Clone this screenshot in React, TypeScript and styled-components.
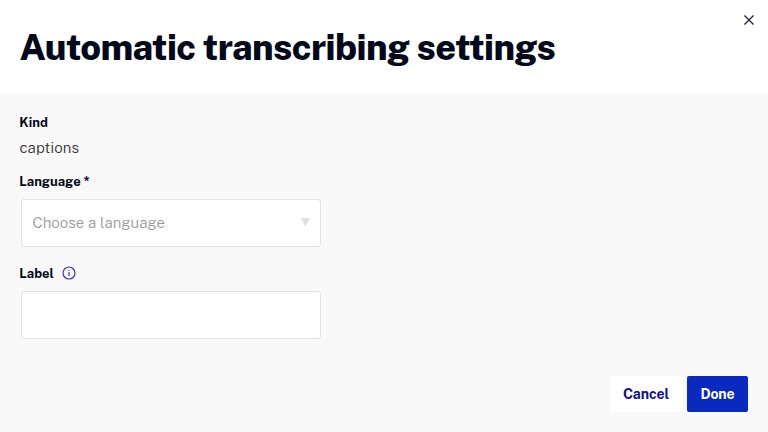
import React from "react";
import styled, { createGlobalStyle } from "styled-components";

const GlobalStyle = createGlobalStyle`
  * { box-sizing: border-box; }
  body { margin: 0; background: #f9f9f9; font-family: "Public Sans", Inter, "Liberation Sans", sans-serif; color: #03081a; }
`;
const Dialog = styled.main`
  height: 432px;
  display: flex;
  flex-direction: column;
  background: #f9f9f9;
`;
const Header = styled.header`
  height: 93px;
  display: flex;
  justify-content: space-between;
  align-items: flex-start;
  background: #fff;
  padding: 13px 13px 0 19.4px;
`;
const Title = styled.h1`
  margin: 13px 0 0;
  font-size: 36px;
  line-height: 43px;
  font-weight: 800;
  letter-spacing: -0.54px;
  white-space: nowrap;
`;
const CloseButton = styled.button`
  border: 0;
  padding: 0;
  background: none;
  width: 12px;
  height: 14px;
  display: flex;
  align-items: center;
  justify-content: center;
`;
const Form = styled.form`
  flex: 1;
  display: flex;
  flex-direction: column;
  align-items: flex-start;
  padding: 19px 20px 20px 19px;
`;
const FieldLabel = styled.label`
  display: flex;
  align-items: center;
  gap: 8px;
  height: 20px;
  padding-left: 0.3px;
  font-size: 13px;
  letter-spacing: 0.03px;
  font-weight: 700;
`;
const Value = styled.p`
  margin: 6px 0 13px;
  padding-left: 0.4px;
  font-size: 15px;
  line-height: 20px;
  font-weight: 300;
  letter-spacing: 0.13px;
  color: #333;
`;
const Control = styled.div`
  width: 300px;
  height: 48px;
  margin: 8px 0 16px 2px;
  display: flex;
  align-items: center;
  justify-content: space-between;
  padding: 0 10px 1px 10.4px;
  border: 1px solid #e3e3e3;
  border-radius: 3px;
  background: #fff;
`;
const Placeholder = styled.span`
  font-size: 15px;
  font-weight: 300;
  letter-spacing: 0.05px;
  color: #999;
`;
const Actions = styled.footer`
  width: 100%;
  display: flex;
  justify-content: flex-end;
  gap: 5px;
  margin-top: auto;
`;
const Button = styled.button<{ $primary?: boolean; $width: number }>`
  width: ${(p) => p.$width}px;
  height: 36px;
  border: 0;
  border-radius: 2px;
  padding: 0 0 1px;
  font: 700 14px "Public Sans", Inter, sans-serif;
  letter-spacing: -0.08px;
  background: ${(p) => (p.$primary ? "#0a2abf" : "#fff")};
  color: ${(p) => (p.$primary ? "#fff" : "#10108a")};
`;

export default function App() {
  return (
    <>
      <GlobalStyle />
      <Dialog>
        <Header>
          <Title>Automatic transcribing settings</Title>
          <CloseButton type="button" aria-label="Close">
            <svg width="10" height="10" viewBox="0 0 10 10" stroke="#222733" strokeWidth="1.4"><path d="M.5.5l9 9M9.5.5l-9 9" /></svg>
          </CloseButton>
        </Header>
        <Form>
          <FieldLabel>Kind</FieldLabel>
          <Value>captions</Value>
          <FieldLabel>Language *</FieldLabel>
          <Control>
            <Placeholder>Choose a language</Placeholder>
            <svg width="9" height="9" viewBox="0 0 9 9" fill="#dfe1e0"><path d="M0 0h9L4.5 9z" /></svg>
          </Control>
          <FieldLabel>
            Label
            <svg width="14" height="14" viewBox="0 0 14 14" fill="none" stroke="#3d32a8" strokeWidth="1.2"><circle cx="7" cy="7" r="6" /><path d="M7 6v4M7 3.8v1.2" /></svg>
          </FieldLabel>
          <Control />
          <Actions>
            <Button type="button" $width={72}>Cancel</Button>
            <Button type="button" $primary $width={61}>Done</Button>
          </Actions>
        </Form>
      </Dialog>
    </>
  );
}
